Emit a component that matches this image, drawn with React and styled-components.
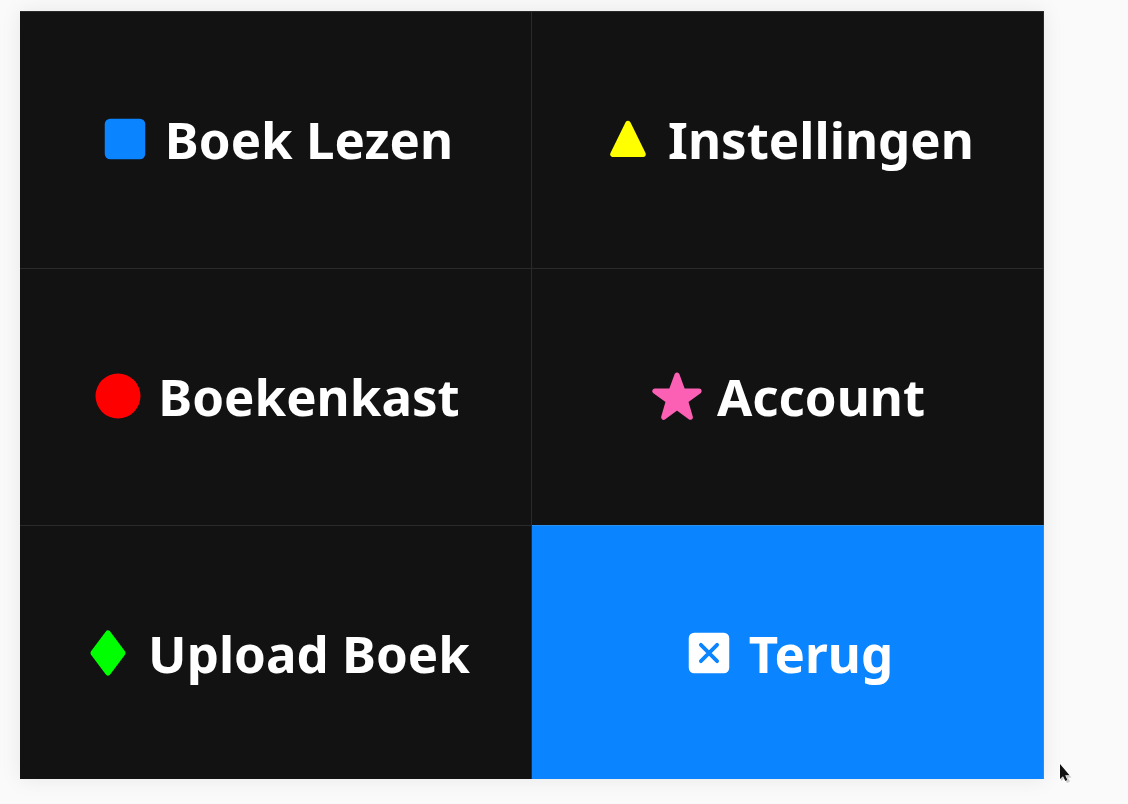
import React from "react";
import styled, { createGlobalStyle } from "styled-components";

const GlobalStyle = createGlobalStyle`
  *, *::before, *::after { box-sizing: border-box; }
  body {
    margin: 0;
    background: #fafafa;
    font-family: "Noto Sans", sans-serif;
  }
`;

const Page = styled.div`
  position: relative;
  display: flex;
  min-height: 100vh;
  padding: 11px 84px 25px 20px;
  overflow: hidden;
`;

const MenuGrid = styled.nav`
  flex: 1;
  display: grid;
  grid-template-columns: 1fr 1fr;
  grid-template-rows: 257fr 257fr 254fr;
  box-shadow: 0 0 20px rgba(0, 0, 0, 0.08);
`;

const MenuButton = styled.button`
  display: flex;
  align-items: center;
  justify-content: center;
  gap: 13px;
  min-width: 0;
  margin: 0;
  padding: 0 0 2px;
  border: solid ${(p) => (p.$active ? "#2a8fef" : "#2a2a2a")};
  border-width: 1px 1px 0 0;
  background: ${(p) => (p.$active ? "#0a84ff" : "#121212")};
  color: #fff;
  font-family: inherit;
  font-size: 51px;
  font-weight: 700;
  line-height: 70px;
  white-space: nowrap;
  cursor: pointer;

  &:nth-last-child(-n + 2) {
    padding-bottom: 0;
  }
`;

const Icon = styled.svg`
  flex: none;
  display: block;
  width: 54px;
  height: 54px;
  color: ${(p) => p.$tint};
  fill: currentColor;
  stroke-linejoin: round;
  stroke-linecap: round;
`;

const Pointer = styled.svg`
  position: absolute;
  right: 56px;
  bottom: 20px;
  width: 14px;
  height: 20px;
`;

const shapes = {
  square: <rect x="3" y="3" width="18" height="18" rx="2.4" />,
  triangle: <path d="M12 5.1 5.3 18.8H18.7Z" stroke="currentColor" strokeWidth="2.4" />,
  circle: <circle cx="12" cy="12" r="10" />,
  star: (
    <path
      d="M12 2.7 14.6 9.8 21.8 9.8 15.8 14.2 17.9 21.4 12 17.1 6.1 21.4 8.2 14.2 2.2 9.8 9.4 9.8Z"
      stroke="currentColor"
      strokeWidth="2.3"
    />
  ),
  diamond: <path d="M12 3.3 18.5 12 12 20.7 5.5 12Z" stroke="currentColor" strokeWidth="2.6" />,
  close: (
    <>
      <rect x="3" y="3" width="18" height="18" rx="2.4" />
      <path d="M8.4 8.4 15.6 15.6M15.6 8.4 8.4 15.6" stroke="#0a84ff" strokeWidth="1.7" />
    </>
  ),
};

const items = [
  { label: "Boek Lezen", shape: "square", tint: "#0a84ff" },
  { label: "Instellingen", shape: "triangle", tint: "#ffff00" },
  { label: "Boekenkast", shape: "circle", tint: "#ff0000" },
  { label: "Account", shape: "star", tint: "#fb60b4" },
  { label: "Upload Boek", shape: "diamond", tint: "#00ff00" },
  { label: "Terug", shape: "close", tint: "#ffffff", active: true },
];

export default function App() {
  return (
    <Page>
      <GlobalStyle />
      <MenuGrid aria-label="Menu">
        {items.map(({ label, shape, tint, active }) => (
          <MenuButton key={label} type="button" $active={active}>
            <Icon viewBox="0 0 24 24" $tint={tint} aria-hidden="true">
              {shapes[shape]}
            </Icon>
            <span>{label}</span>
          </MenuButton>
        ))}
      </MenuGrid>
      <Pointer viewBox="0 0 14 20" aria-hidden="true">
        <path d="M3 2V17L6.5 14 9 19 12 17.5 9.8 13.5H13.5Z" fill="#999" opacity=".5" />
        <path
          d="M2 0V15L5 12.2 7.4 17 9.4 16 7.2 11.2H11.5Z"
          fill="#111"
          stroke="#fff"
          strokeWidth="1"
          paintOrder="stroke"
        />
      </Pointer>
    </Page>
  );
}
